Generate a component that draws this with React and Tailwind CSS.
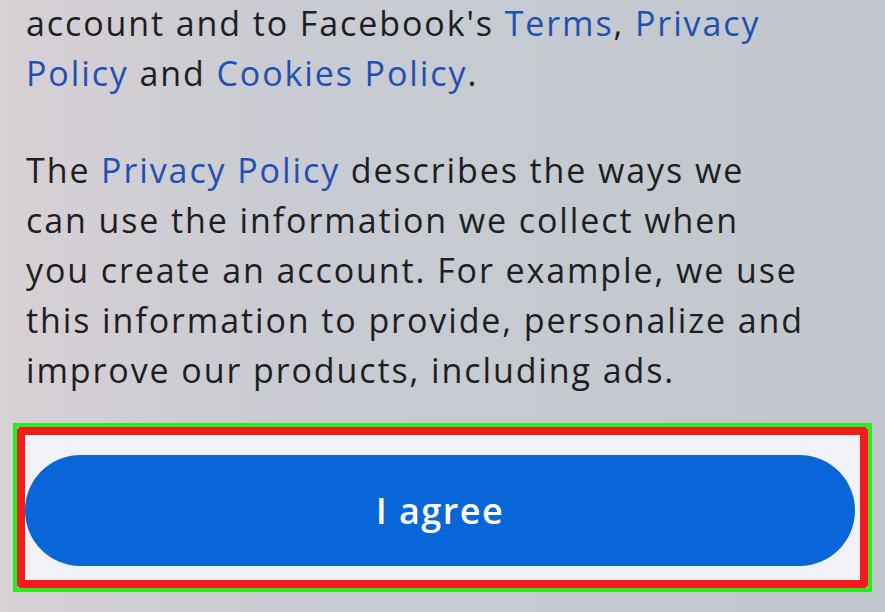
export default function App() {
  const link = "text-[#1f51b3]";
  return (
    <div
      className="w-[885px] h-[612px] overflow-hidden bg-[linear-gradient(90deg,#d8d1d5_0%,#ccccd3_25%,#c6cad1_55%,#c2c7ce_100%)] text-[#1d1f22]"
      style={{ fontFamily: '"Open Sans", "Liberation Sans", sans-serif' }}
    >
      <div className="pl-[26px] -mt-[2px] text-[34px] leading-[50px] tracking-[1.9px] whitespace-nowrap">
        <p>
          account and to Facebook's <span className={link}>Terms</span>,{" "}
          <span className={link}>Privacy</span>
          <br />
          <span className={link}>Policy</span> and{" "}
          <span className={link}>Cookies Policy</span>.
        </p>
        <p className="mt-[47px]">
          The <span className={link}>Privacy Policy</span> describes the ways we
          <br />
          can use the information we collect when
          <br />
          you create an account. For example, we use
          <br />
          this information to provide, personalize and
          <br />
          improve our products, including ads.
        </p>
      </div>
      <div className="mt-[28px] ml-[13px] w-[859px] border-[4px] border-[#22ee22]">
        <div className="border-[8px] border-[#f41c1a] rounded-[4px] bg-[#f1f1f8] pt-[20px] pb-[14px] pr-[5px]">
          <button className="w-full h-[111px] rounded-full bg-[#0866d8] text-white text-[36px] font-semibold tracking-[1.5px] flex items-center justify-center">
            I agree
          </button>
        </div>
      </div>
    </div>
  );
}
